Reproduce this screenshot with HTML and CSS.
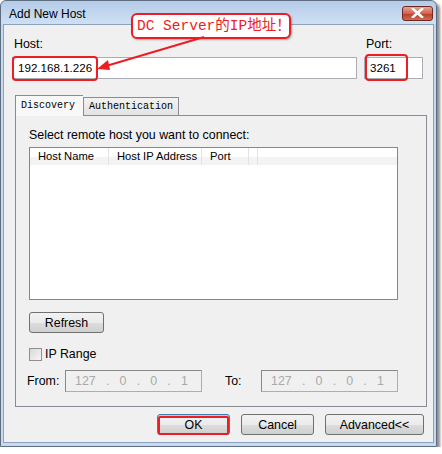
FILE: index.html
```html
<!DOCTYPE html>
<html>
<head>
<meta charset="utf-8">
<link rel="stylesheet" href="styles.css">
</head>
<body>
<div class="window">
  <div class="titlebar">
    <span class="title">Add New Host</span>
    <div class="close"><svg width="13" height="10" viewBox="0 0 13 10"><path d="M2 1 L11 9 M11 1 L2 9" stroke="#fff" stroke-width="2.6" stroke-linecap="square"/></svg></div>
  </div>
  <div class="client">
    <div class="hostrow">
      <div class="field grow">
        <label class="lbl">Host:</label>
        <div class="input">192.168.1.226</div>
      </div>
      <div class="field port">
        <label class="lbl">Port:</label>
        <div class="input">3261</div>
      </div>
    </div>
    <div class="tabs">
      <div class="tab active">Discovery</div>
      <div class="tab">Authentication</div>
    </div>
    <div class="panel">
      <div class="txt">Select remote host you want to connect:</div>
      <div class="list">
        <div class="lhead">
          <div class="col c1">Host Name</div>
          <div class="col c2">Host IP Address</div>
          <div class="col c3">Port</div>
          <div class="col c4"></div>
        </div>
      </div>
      <div class="btn refresh">Refresh</div>
      <div class="check"><span class="box"></span><span>IP Range</span></div>
      <div class="range">
        <span class="rlbl">From:</span>
        <div class="ip"><span>127</span><span>.</span><span>0</span><span>.</span><span>0</span><span>.</span><span>1</span></div>
        <span class="rlbl to">To:</span>
        <div class="ip"><span>127</span><span>.</span><span>0</span><span>.</span><span>0</span><span>.</span><span>1</span></div>
      </div>
    </div>
    <div class="buttons">
      <div class="btn ok">OK</div>
      <div class="btn">Cancel</div>
      <div class="btn adv">Advanced&lt;&lt;</div>
    </div>
  </div>

  <div class="callout">DC Server的IP地址！</div>
  <svg class="arrow" width="442" height="100" viewBox="0 0 442 100">
    <line x1="204" y1="37" x2="106" y2="66" stroke="#ee1c24" stroke-width="2"/>
    <path d="M97 69 L108 60 L110 70 Z" fill="#ee1c24"/>
  </svg>
  <div class="mark mhost"></div>
  <div class="mark mport"></div>
  <div class="mark mok"></div>
</div>
</body>
</html>
```
FILE: styles.css
```css
* { box-sizing: border-box; }
body {
  margin: 0;
  background: #fff;
  font-family: "Liberation Sans", "DejaVu Sans", sans-serif;
  font-size: 12.4px;
  color: #000;
}
.window {
  position: relative;
  width: 437px;
  height: 447px;
  border: 1px solid #5d6c7e;
  border-radius: 6px 6px 0 0;
  background: linear-gradient(#a9c3e3, #c7daf1 30px);
  box-shadow: 3px 3px 3px rgba(0,0,0,0.45);
  display: flex;
  flex-direction: column;
  padding: 0 2px 3px 2px;
}
.titlebar {
  height: 23px;
  display: flex;
  align-items: center;
  justify-content: space-between;
  padding-left: 8px;
  background: linear-gradient(#b4cbe8, #cfe0f4);
  margin: 0 -2px;
  border-radius: 6px 6px 0 0;
}
.title {
  font-size: 12px;
  color: #000;
  padding-top: 2px;
}
.close {
  width: 31px;
  height: 15px;
  margin-right: 3px;
  margin-top: 1px;
  border: 1px solid #6e2a22;
  border-radius: 3px;
  background: linear-gradient(#e7a597, #d2614d 50%, #b83d27 51%, #cf6b50);
  display: flex;
  align-items: center;
  justify-content: center;
}
.client {
  flex: 1;
  background: #f0f0f0;
  border: 1px solid #8da2bd;
  display: flex;
  flex-direction: column;
  padding: 0 10px 0 8px;
}
.hostrow {
  display: flex;
  gap: 7px;
  margin-top: 12px;
}
.field { display: flex; flex-direction: column; }
.grow { flex: 1; }
.port { width: 59px; }
.lbl { height: 20px; padding-left: 2px; }
.input {
  height: 22px;
  border: 1px solid #abadb3;
  background: #fff;
  padding: 3px 5px;
  font-size: 11.6px;
}
.tabs {
  display: flex;
  align-items: flex-end;
  margin: 15px 0 0 3px;
  height: 21px;
  position: relative;
  z-index: 1;
}
.tab {
  font-family: "Liberation Mono", "Noto Sans CJK SC", monospace;
  font-size: 10px;
  height: 18px;
  border: 1px solid #898c95;
  border-bottom: none;
  background: linear-gradient(#f2f2f2, #e3e3e3);
  padding: 3px 5px 0 5px;
}
.tab.active {
  height: 21px;
  background: #f8f8f8;
  border-right: none;
  padding: 4px 6px 0 5px;
  margin-bottom: -1px;
  width: 68px;
}
.panel {
  margin: 0 0 0 3px;
  width: 412px;
  height: 292px;
  border: 1px solid #898c95;
  background: #f0f0f0;
  display: flex;
  flex-direction: column;
  padding: 0 0 0 13px;
}
.txt { margin-top: 12px; height: 19px; }
.list {
  width: 369px;
  height: 153px;
  border: 1px solid #828790;
  background: #fff;
}
.lhead {
  display: flex;
  height: 17px;
  background: linear-gradient(#fff, #fff 50%, #f2f3f5 51%, #f2f3f5);
  font-size: 11.2px;
}
.col {
  border-right: 1px solid #e1e3e6;
  padding: 2px 0 0 8px;
  white-space: nowrap;
}
.c1 { width: 79px; }
.c2 { width: 93px; }
.c3 { width: 47px; }
.c4 { width: 9px; padding: 0; }
.btn {
  height: 21px;
  border: 1px solid #707070;
  border-radius: 3px;
  background: linear-gradient(#f2f2f2, #ebebeb 50%, #dddddd 51%, #cfcfcf);
  display: flex;
  align-items: center;
  justify-content: center;
}
.refresh { width: 75px; margin-top: 12px; }
.check {
  display: flex;
  align-items: center;
  gap: 3px;
  margin-top: 14px;
  height: 14px;
}
.box {
  width: 13px;
  height: 13px;
  border: 1px solid #8f8f8f;
  background: linear-gradient(135deg, #d9d9d9, #f6f6f6);
}
.range {
  display: flex;
  align-items: center;
  margin-top: 9px;
  height: 22px;
}
.rlbl { width: 38px; margin-left: -2px; }
.rlbl.to { width: 36px; margin-left: 23px; }
.ip {
  width: 137px;
  height: 22px;
  border: 1px solid #aeaeae;
  border-top-color: #888;
  border-left-color: #888;
  background: #f0f0f0;
  color: #a9a9a9;
  display: flex;
  justify-content: space-around;
  align-items: center;
  padding: 0 8px 0 4px;
}
.buttons {
  display: flex;
  justify-content: flex-end;
  gap: 11px;
  margin-top: 7px;
  margin-right: -1px;
}
.buttons .btn { width: 73px; }
.buttons .ok { border-color: #3c7fb1; box-shadow: inset 0 0 0 1px #9cd5f5; }
.buttons .adv { width: 99px; }

.callout {
  position: absolute;
  left: 130px;
  top: 12px;
  width: 160px;
  height: 26px;
  border: 2px solid #ee1c24;
  border-radius: 6px;
  background: #fff;
  color: #ee1c24;
  font-family: "Liberation Mono", "Noto Sans CJK SC", monospace;
  font-size: 14.5px;
  line-height: 22px;
  padding-left: 4px;
  white-space: nowrap;
  box-shadow: 1px 1px 2px rgba(0,0,0,0.3);
}
.arrow { position: absolute; left: -1px; top: -1px; pointer-events: none; }
.mark {
  position: absolute;
  border: 2px solid #ee1c24;
  border-radius: 4px;
}
.mhost { left: 11px; top: 55px; width: 86px; height: 25px; }
.mport { left: 364px; top: 53px; width: 43px; height: 27px; }
.mok { left: 157px; top: 415px; width: 71px; height: 19px; border-radius: 2px; }
```
